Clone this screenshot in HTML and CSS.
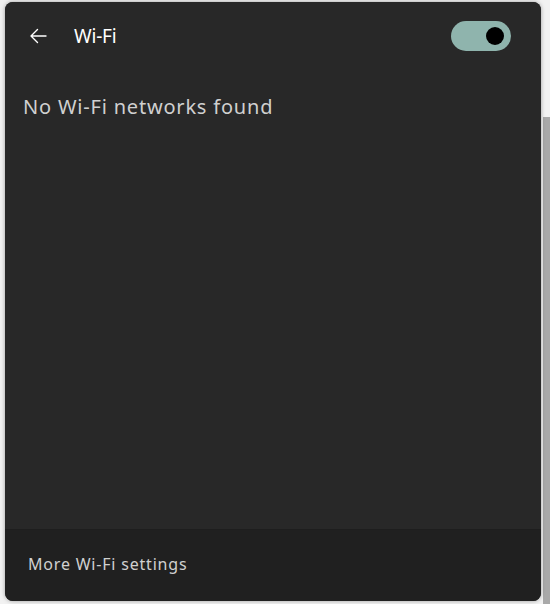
FILE: index.html
```html
<!DOCTYPE html>
<html>
<head>
<meta charset="utf-8">
<link rel="stylesheet" href="styles.css">
</head>
<body>
<div class="backdrop"></div>
<div class="panel">
  <div class="main">
    <div class="header">
      <svg class="back" width="20" height="20" viewBox="0 0 20 20"><path d="M18 10H3M9.5 3.5L3 10l6.5 6.5" fill="none" stroke="#ffffff" stroke-width="1.4" stroke-linecap="round" stroke-linejoin="round"/></svg>
      <span class="title">Wi-Fi</span>
      <span class="toggle"><span class="knob"></span></span>
    </div>
    <div class="empty">No Wi-Fi networks found</div>
  </div>
  <div class="footer">More Wi-Fi settings</div>
</div>
</body>
</html>
```
FILE: styles.css
```css
html, body {
  margin: 0;
  padding: 0;
  width: 550px;
  height: 604px;
  background: #f2f2f2;
  overflow: hidden;
  font-family: "Noto Sans", "Open Sans", sans-serif;
}
.backdrop {
  position: absolute;
  left: 543px;
  top: 117px;
  width: 7px;
  height: 487px;
  background: #a9a9a9;
}
.panel {
  position: relative;
  margin: 2px 0 0 5px;
  width: 536px;
  height: 599px;
  border-radius: 8px;
  overflow: hidden;
  display: flex;
  flex-direction: column;
  box-shadow: 0 0 4px rgba(0,0,0,0.35);
  background: #272727;
}
.main {
  flex: 1;
  display: flex;
  flex-direction: column;
  background: #282828;
}
.header {
  display: flex;
  align-items: center;
  height: 68px;
  padding: 0 30px 0 23px;
}
.back {
  display: block;
}
.title {
  margin-left: 26px;
  color: #ffffff;
  font-size: 19px;
  letter-spacing: -0.2px;
  flex: 1;
}
.toggle {
  width: 60px;
  height: 30px;
  border-radius: 15px;
  background: #8fb4ad;
  display: flex;
  align-items: center;
  justify-content: flex-end;
  padding-right: 7px;
  box-sizing: border-box;
}
.knob {
  width: 18px;
  height: 18px;
  border-radius: 50%;
  background: #000000;
}
.empty {
  margin-top: 23px;
  padding-left: 18px;
  color: #d0d0d0;
  font-size: 20px;
  letter-spacing: 0.8px;
}
.footer {
  height: 72px;
  border-top: 1px solid #1e1e1e;
  background: #202020;
  color: #d0d0d0;
  font-size: 16px;
  letter-spacing: 0.8px;
  padding: 23px 0 0 23px;
  box-sizing: border-box;
}
```
